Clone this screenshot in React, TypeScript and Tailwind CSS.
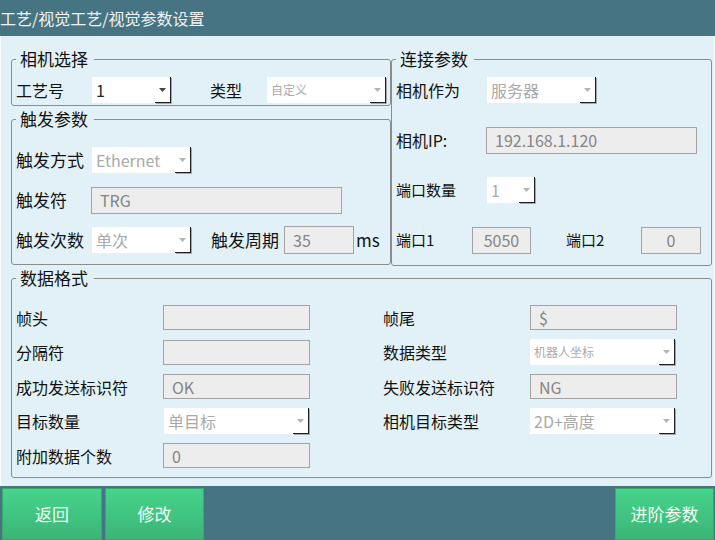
import type { ReactNode } from "react";

// 分组框（fieldset + legend）
function Group({ title, className, children }: { title: string; className: string; children?: ReactNode }) {
  return (
    <fieldset className={`min-w-0 rounded-[3px] border border-[#8c8c8c] px-[4px] ${className}`}>
      <legend className="pl-[4px] pr-[6px] text-[17px] leading-[22px] text-[#111]">{title}</legend>
      {children}
    </fieldset>
  );
}

// 下拉框（右侧带箭头按钮）
function Select({
  value,
  className,
  active = false,
  small = false,
}: {
  value: string;
  className: string;
  active?: boolean;
  small?: boolean;
}) {
  return (
    <div className={`flex h-[26px] shrink-0 bg-white ${className}`}>
      <span
        className={`flex flex-1 items-center overflow-hidden whitespace-nowrap pl-[4px] ${
          active ? "text-[#222]" : "text-[#a9a9a9]"
        } ${small ? "text-[12px]" : "text-[16px]"}`}
      >
        {value}
      </span>
      <span className="flex w-[16px] items-center justify-center border-r-[1.5px] border-b-[1.5px] border-[#1e1e1e] shadow-[1px_1px_0_#a8a8a8]">
        <svg width="7" height="4" viewBox="0 0 7 4">
          <path d="M0 0h7L3.5 4z" fill={active ? "#444" : "#b4b4b4"} />
        </svg>
      </span>
    </div>
  );
}

// 只读输入框
function Field({ value = "", className, center = false }: { value?: string; className: string; center?: boolean }) {
  return (
    <div
      className={`flex shrink-0 items-center border border-[#a3a3a3] bg-[#ededed] text-[16px] text-[#858585] ${
        center ? "justify-center" : "pl-[8px]"
      } ${className}`}
    >
      {value}
    </div>
  );
}

function Btn({ label, className }: { label: string; className: string }) {
  return (
    <button
      className={`flex h-[52px] items-center justify-center border border-[#38a86c] bg-linear-to-b from-[#47d48c] to-[#3bb577] text-[17px] text-[#f4fff4] ${className}`}
    >
      {label}
    </button>
  );
}

export default function App() {
  return (
    <div className="flex h-[540px] w-[715px] flex-col overflow-hidden font-['Noto_Sans_CJK_SC','Noto_Sans',sans-serif] text-[#111]">
      {/* 标题栏 */}
      <div className="flex h-[36px] shrink-0 items-center bg-[#467482] text-[16px] text-[#f2f2f2]">
        工艺/视觉工艺/视觉参数设置
      </div>

      {/* 主体 */}
      <div className="flex h-[450px] shrink-0 flex-col border-x border-[#f7fbfc] bg-[#e2f1f7] pl-[10px] pt-[12px]">
        <div className="flex">
          {/* 左列 */}
          <div className="flex w-[380px] flex-col gap-[2px]">
            <Group title="相机选择" className="h-[58px]">
              <div className="mt-[7px] flex h-[26px] items-center text-[16px]">
                <span className="w-[76px]">工艺号</span>
                <Select value="1" active className="w-[79px]" />
                <span className="ml-[39px] w-[57px]">类型</span>
                <Select value="自定义" small className="w-[119px]" />
              </div>
            </Group>

            <Group title="触发参数" className="h-[157px]">
              <div className="mt-[17px] flex flex-col gap-[14px] text-[17px]">
                <div className="flex h-[26px] items-center">
                  <span className="w-[76px]">触发方式</span>
                  <Select value="Ethernet" className="w-[99px]" />
                </div>
                <div className="flex h-[26px] items-center">
                  <span className="w-[75px]">触发符</span>
                  <Field value="TRG" className="h-[27px] w-[251px]" />
                </div>
                <div className="flex h-[26px] items-center">
                  <span className="w-[76px]">触发次数</span>
                  <Select value="单次" className="w-[99px]" />
                  <span className="ml-[20px] w-[73px]">触发周期</span>
                  <Field value="35" className="h-[28px] w-[70px]" />
                  <span className="ml-[2px]">ms</span>
                </div>
              </div>
            </Group>
          </div>

          {/* 右列 */}
          <Group title="连接参数" className="h-[218px] w-[321px]">
            <div className="mt-[7px] flex flex-col gap-[24px] text-[16px]">
              <div className="flex h-[26px] items-center">
                <span className="w-[91px]">相机作为</span>
                <Select value="服务器" className="w-[109px]" />
              </div>
              <div className="flex h-[26px] items-center">
                <span className="w-[90px]">相机IP:</span>
                <Field value="192.168.1.120" className="h-[27px] w-[211px]" />
              </div>
              <div className="flex h-[26px] items-center">
                <span className="w-[91px] text-[15px]">端口数量</span>
                <Select value="1" className="w-[48px]" />
              </div>
              <div className="flex h-[26px] items-center text-[15px]">
                <span className="w-[76px]">端口1</span>
                <Field value="5050" center className="h-[27px] w-[59px]" />
                <span className="ml-[35px] w-[75px]">端口2</span>
                <Field value="0" center className="h-[27px] w-[60px]" />
              </div>
            </div>
          </Group>
        </div>

        <Group title="数据格式" className="mt-[1px] h-[211px] w-[701px]">
          <div className="mt-[16px] flex text-[16px]">
            <div className="flex w-[294px] flex-col gap-[9.5px]">
              <div className="flex h-[25px] items-center">
                <span className="w-[147px]">帧头</span>
                <Field className="h-[25px] w-[147px]" />
              </div>
              <div className="flex h-[25px] items-center">
                <span className="w-[147px]">分隔符</span>
                <Field className="h-[25px] w-[147px]" />
              </div>
              <div className="flex h-[25px] items-center">
                <span className="w-[147px]">成功发送标识符</span>
                <Field value="OK" className="h-[25px] w-[147px]" />
              </div>
              <div className="flex h-[25px] items-center">
                <span className="w-[148px]">目标数量</span>
                <Select value="单目标" className="h-[25px] w-[145px]" />
              </div>
              <div className="flex h-[25px] items-center">
                <span className="w-[147px]">附加数据个数</span>
                <Field value="0" className="h-[25px] w-[147px]" />
              </div>
            </div>
            <div className="ml-[73px] flex w-[294px] flex-col gap-[9.5px]">
              <div className="flex h-[25px] items-center">
                <span className="w-[147px]">帧尾</span>
                <Field value="$" className="h-[25px] w-[147px]" />
              </div>
              <div className="flex h-[25px] items-center">
                <span className="w-[147px]">数据类型</span>
                <Select value="机器人坐标" small className="w-[145px]" />
              </div>
              <div className="flex h-[25px] items-center">
                <span className="w-[147px]">失败发送标识符</span>
                <Field value="NG" className="h-[25px] w-[147px]" />
              </div>
              <div className="flex h-[25px] items-center">
                <span className="w-[147px]">相机目标类型</span>
                <Select value="2D+高度" className="w-[145px]" />
              </div>
            </div>
          </div>
        </Group>
      </div>

      {/* 底部按钮栏 */}
      <div className="flex h-[54px] shrink-0 gap-[3px] bg-[#467482] pl-[2px] pt-[2px]">
        <Btn label="返回" className="w-[100px]" />
        <Btn label="修改" className="w-[99px]" />
        <div className="flex-1" />
        <Btn label="进阶参数" className="mr-[1px] w-[99px]" />
      </div>
    </div>
  );
}
